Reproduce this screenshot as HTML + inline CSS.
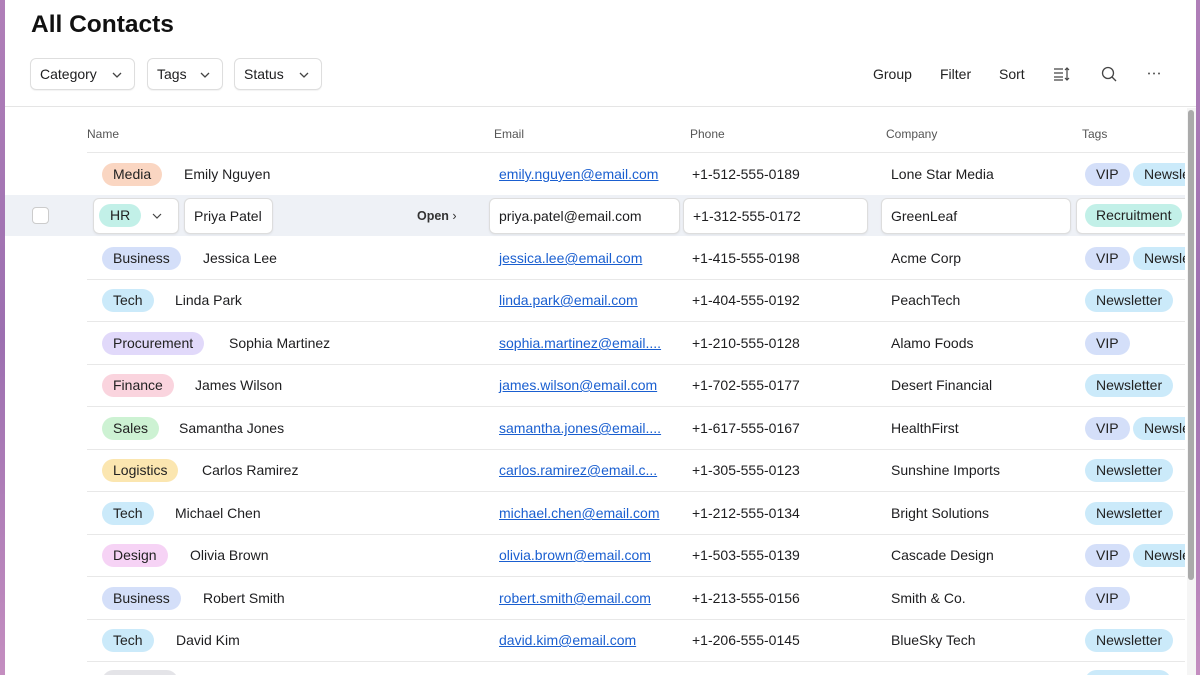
<!DOCTYPE html>
<html><head><meta charset="utf-8"><style>
*{box-sizing:border-box;margin:0;padding:0}
body{width:1200px;height:675px;overflow:hidden;background:linear-gradient(180deg,#b07fb8,#9c6fb0 50%,#c48ec0);font-family:"Liberation Sans",sans-serif;color:#1d1d1f;position:relative}
.panel{position:absolute;left:5px;top:0;width:1191px;height:675px;background:#fff;overflow:hidden}
.clip{position:absolute;left:0;top:0;width:1180px;height:675px;overflow:hidden}
.abs{position:absolute}
h1{position:absolute;left:26px;top:11px;font-size:24.5px;font-weight:bold;color:#111}
.btn{position:absolute;top:58px;height:32px;border:1px solid #dedede;border-radius:6px;font-size:14px;line-height:30px;padding-left:9px;box-shadow:0 1px 1px rgba(0,0,0,.05)}
.btn svg{position:absolute;right:12px;top:13px}
.tb{position:absolute;top:66px;font-size:14px;color:#222}
.hline{position:absolute;left:0;width:1191px;height:1px;background:#e5e5e5}
.th{position:absolute;top:127px;font-size:12px;color:#555}
.row{position:absolute;left:0;width:1180px;height:42px}
.sep{position:absolute;left:82px;width:1100px;height:1px;background:#e8e8e8}
.pill{position:absolute;height:23px;line-height:23px;border-radius:12px;padding:0 11px;font-size:14px;color:#222;white-space:nowrap}
.t{position:absolute;font-size:14px;white-space:nowrap;line-height:20px}
.em{color:#1a5fd0;text-decoration:underline}
.box{position:absolute;top:3px;height:36px;background:#fff;border:1px solid #ddd;border-radius:6px;box-shadow:0 1px 2px rgba(0,0,0,.06);font-size:14px;line-height:34px;padding-left:9px;white-space:nowrap;overflow:hidden}
</style></head><body>
<div class="panel">
<h1>All Contacts</h1>
<div class="btn" style="left:25px;width:105px">Category<svg width="10" height="6"><path d="M1 1l4 4 4-4" stroke="#444" fill="none" stroke-width="1.3"/></svg></div>
<div class="btn" style="left:142px;width:76px">Tags<svg width="10" height="6"><path d="M1 1l4 4 4-4" stroke="#444" fill="none" stroke-width="1.3"/></svg></div>
<div class="btn" style="left:229px;width:88px">Status<svg width="10" height="6"><path d="M1 1l4 4 4-4" stroke="#444" fill="none" stroke-width="1.3"/></svg></div>
<div class="tb" style="left:868px">Group</div>
<div class="tb" style="left:935px">Filter</div>
<div class="tb" style="left:994px">Sort</div>
<svg class="abs" style="left:1048px;top:67px" width="18" height="14"><path d="M1 2h9M1 6h9M1 10h9M1 13h9" stroke="#444" stroke-width="1.2"/><path d="M14 1v12M12 3l2-2 2 2M12 11l2 2 2-2" stroke="#444" fill="none" stroke-width="1.2"/></svg>
<svg class="abs" style="left:1096px;top:66px" width="16" height="16"><circle cx="7" cy="7" r="5.5" stroke="#444" fill="none" stroke-width="1.3"/><path d="M11 11l4 4" stroke="#444" stroke-width="1.3"/></svg>
<svg class="abs" style="left:1142px;top:72px" width="14" height="3"><circle cx="2" cy="1.5" r="1" fill="#555"/><circle cx="7" cy="1.5" r="1" fill="#555"/><circle cx="12" cy="1.5" r="1" fill="#555"/></svg>
<div class="hline" style="top:106px"></div>
<div class="abs" style="left:1182px;top:108px;width:9px;height:567px;background:#f5f5f5"></div>
<div class="abs" style="left:1183px;top:110px;width:6px;height:470px;background:#aaa;border-radius:3px"></div>
<div class="clip">
<div class="th" style="left:82px">Name</div>
<div class="th" style="left:489px">Email</div>
<div class="th" style="left:685px">Phone</div>
<div class="th" style="left:881px">Company</div>
<div class="th" style="left:1077px">Tags</div>
<div class="sep" style="top:152px"></div>

<div class="row" style="top:153px"><div class="pill" style="left:97px;top:10px;background:#fad6c2">Media</div><div class="t" style="left:179px;top:11px">Emily Nguyen</div><div class="t em" style="left:494px;top:11px">emily.nguyen@email.com</div><div class="t" style="left:687px;top:11px">+1-512-555-0189</div><div class="t" style="left:886px;top:11px">Lone Star Media</div><div class="pill" style="left:1080px;top:10px;background:#d4dff9">VIP</div><div class="pill" style="left:1128px;top:10px;background:#cbeafa">Newsletter</div></div>

<div class="row" style="top:195px;left:0;width:1180px;background:#eef1f6;height:41px">
<div class="abs" style="left:27px;top:12px;width:17px;height:17px;border:1px solid #ccc;border-radius:4px;background:#fff"></div>
<div class="box" style="left:88px;width:86px;padding-left:0"><div class="pill" style="left:5px;top:5px;background:#c2f0e8">HR</div><svg class="abs" style="left:58px;top:14px" width="10" height="6"><path d="M1 1l4 4 4-4" stroke="#444" fill="none" stroke-width="1.2"/></svg></div>
<div class="box" style="left:179px;width:89px">Priya Patel</div>
<div class="t" style="left:412px;top:11px;font-size:12.5px;font-weight:bold;color:#333">Open <span style="font-weight:normal">›</span></div>
<div class="box" style="left:484px;width:191px">priya.patel@email.com</div>
<div class="box" style="left:678px;width:185px">+1-312-555-0172</div>
<div class="box" style="left:876px;width:190px">GreenLeaf</div>
<div class="box" style="left:1071px;width:120px;padding-left:0"><div class="pill" style="left:8px;top:5px;background:#c2f0e8">Recruitment</div></div>
</div>

<div class="row" style="top:237px"><div class="pill" style="left:97px;top:10px;background:#d4dff9">Business</div><div class="t" style="left:198px;top:11px">Jessica Lee</div><div class="t em" style="left:494px;top:11px">jessica.lee@email.com</div><div class="t" style="left:687px;top:11px">+1-415-555-0198</div><div class="t" style="left:886px;top:11px">Acme Corp</div><div class="pill" style="left:1080px;top:10px;background:#d4dff9">VIP</div><div class="pill" style="left:1128px;top:10px;background:#cbeafa">Newsletter</div></div>
<div class="sep" style="top:279px"></div>
<div class="row" style="top:279px"><div class="pill" style="left:97px;top:10px;background:#cbeafa">Tech</div><div class="t" style="left:170px;top:11px">Linda Park</div><div class="t em" style="left:494px;top:11px">linda.park@email.com</div><div class="t" style="left:687px;top:11px">+1-404-555-0192</div><div class="t" style="left:886px;top:11px">PeachTech</div><div class="pill" style="left:1080px;top:10px;background:#cbeafa">Newsletter</div></div>
<div class="sep" style="top:321px"></div>
<div class="row" style="top:322px"><div class="pill" style="left:97px;top:10px;background:#e1d9fa">Procurement</div><div class="t" style="left:224px;top:11px">Sophia Martinez</div><div class="t em" style="left:494px;top:11px">sophia.martinez@email....</div><div class="t" style="left:687px;top:11px">+1-210-555-0128</div><div class="t" style="left:886px;top:11px">Alamo Foods</div><div class="pill" style="left:1080px;top:10px;background:#d4dff9">VIP</div></div>
<div class="sep" style="top:364px"></div>
<div class="row" style="top:364px"><div class="pill" style="left:97px;top:10px;background:#fad4de">Finance</div><div class="t" style="left:190px;top:11px">James Wilson</div><div class="t em" style="left:494px;top:11px">james.wilson@email.com</div><div class="t" style="left:687px;top:11px">+1-702-555-0177</div><div class="t" style="left:886px;top:11px">Desert Financial</div><div class="pill" style="left:1080px;top:10px;background:#cbeafa">Newsletter</div></div>
<div class="sep" style="top:406px"></div>
<div class="row" style="top:407px"><div class="pill" style="left:97px;top:10px;background:#cdf2d3">Sales</div><div class="t" style="left:174px;top:11px">Samantha Jones</div><div class="t em" style="left:494px;top:11px">samantha.jones@email....</div><div class="t" style="left:687px;top:11px">+1-617-555-0167</div><div class="t" style="left:886px;top:11px">HealthFirst</div><div class="pill" style="left:1080px;top:10px;background:#d4dff9">VIP</div><div class="pill" style="left:1128px;top:10px;background:#cbeafa">Newsletter</div></div>
<div class="sep" style="top:449px"></div>
<div class="row" style="top:449px"><div class="pill" style="left:97px;top:10px;background:#fbe6b0">Logistics</div><div class="t" style="left:197px;top:11px">Carlos Ramirez</div><div class="t em" style="left:494px;top:11px">carlos.ramirez@email.c...</div><div class="t" style="left:687px;top:11px">+1-305-555-0123</div><div class="t" style="left:886px;top:11px">Sunshine Imports</div><div class="pill" style="left:1080px;top:10px;background:#cbeafa">Newsletter</div></div>
<div class="sep" style="top:491px"></div>
<div class="row" style="top:492px"><div class="pill" style="left:97px;top:10px;background:#cbeafa">Tech</div><div class="t" style="left:170px;top:11px">Michael Chen</div><div class="t em" style="left:494px;top:11px">michael.chen@email.com</div><div class="t" style="left:687px;top:11px">+1-212-555-0134</div><div class="t" style="left:886px;top:11px">Bright Solutions</div><div class="pill" style="left:1080px;top:10px;background:#cbeafa">Newsletter</div></div>
<div class="sep" style="top:534px"></div>
<div class="row" style="top:534px"><div class="pill" style="left:97px;top:10px;background:#f6d3f5">Design</div><div class="t" style="left:185px;top:11px">Olivia Brown</div><div class="t em" style="left:494px;top:11px">olivia.brown@email.com</div><div class="t" style="left:687px;top:11px">+1-503-555-0139</div><div class="t" style="left:886px;top:11px">Cascade Design</div><div class="pill" style="left:1080px;top:10px;background:#d4dff9">VIP</div><div class="pill" style="left:1128px;top:10px;background:#cbeafa">Newsletter</div></div>
<div class="sep" style="top:576px"></div>
<div class="row" style="top:577px"><div class="pill" style="left:97px;top:10px;background:#d4dff9">Business</div><div class="t" style="left:198px;top:11px">Robert Smith</div><div class="t em" style="left:494px;top:11px">robert.smith@email.com</div><div class="t" style="left:687px;top:11px">+1-213-555-0156</div><div class="t" style="left:886px;top:11px">Smith &amp; Co.</div><div class="pill" style="left:1080px;top:10px;background:#d4dff9">VIP</div></div>
<div class="sep" style="top:619px"></div>
<div class="row" style="top:619px"><div class="pill" style="left:97px;top:10px;background:#cbeafa">Tech</div><div class="t" style="left:171px;top:11px">David Kim</div><div class="t em" style="left:494px;top:11px">david.kim@email.com</div><div class="t" style="left:687px;top:11px">+1-206-555-0145</div><div class="t" style="left:886px;top:11px">BlueSky Tech</div><div class="pill" style="left:1080px;top:10px;background:#cbeafa">Newsletter</div></div>
<div class="sep" style="top:661px"></div>
<div class="pill" style="left:97px;top:670px;background:#e4e4e8;width:76px"></div>
<div class="pill" style="left:1080px;top:670px;background:#cbeafa;width:86px"></div>
</div>
</div>
</body></html>
